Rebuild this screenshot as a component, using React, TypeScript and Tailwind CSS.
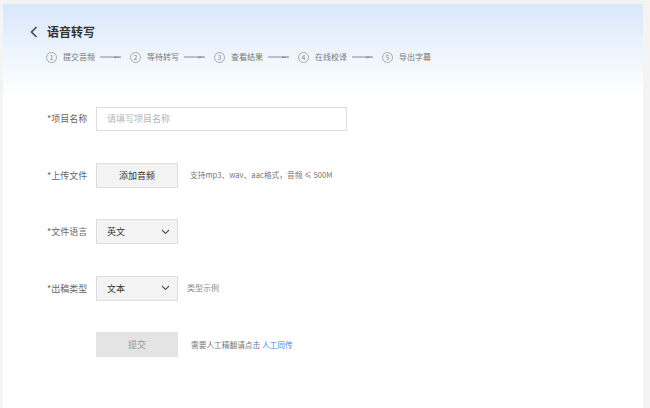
import React from "react"

const steps = ["提交音频", "等待转写", "查看结果", "在线校译", "导出字幕"]

function StepArrow() {
  return (
    <svg width="22" height="6" viewBox="0 0 22 6" className="shrink-0">
      <line x1="0" y1="3" x2="21" y2="3" stroke="#8c8c8c" strokeWidth="1" />
      <polygon points="14,2.4 21.5,3 14,4.2" fill="#8c8c8c" />
    </svg>
  )
}

function Chevron() {
  return (
    <svg width="9" height="6" viewBox="0 0 9 6" className="shrink-0">
      <polyline points="1,1 4.5,4.5 8,1" fill="none" stroke="#555" strokeWidth="1.1" />
    </svg>
  )
}

function Row({ label, children }: { label: string; children: React.ReactNode }) {
  return (
    <div className="flex h-[25px] items-center">
      <span className="w-[49px] shrink-0 text-[9px] leading-none text-[#666]">{label}</span>
      {children}
    </div>
  )
}

export default function App() {
  return (
    <div className="min-h-screen bg-[#f4f4f4] pl-[3px] pr-[7px] pt-[4px] font-['Noto_Sans_CJK_SC',sans-serif]">
      <div className="h-[404px] bg-[linear-gradient(180deg,#d8e7fb_0px,#eef5fd_50px,#ffffff_92px)]">
        {/* header */}
        <div className="pl-[27px] pt-[17px]">
          <div className="flex h-[22px] items-center gap-[9px]">
            <svg width="8" height="12" viewBox="0 0 8 12" className="shrink-0">
              <polyline points="6.5,1 1.5,6 6.5,11" fill="none" stroke="#444" strokeWidth="1.6" />
            </svg>
            <span className="text-[12px] font-bold leading-none text-[#333]">语音转写</span>
          </div>
          <div className="mt-[8px] flex h-[12px] items-center pl-[16px]">
            {steps.map((s, i) => (
              <div key={s} className="flex items-center">
                <span className="flex h-[11px] w-[11px] items-center justify-center rounded-full border border-[#a8a8a8] text-[7px] leading-none text-[#888]">
                  {i + 1}
                </span>
                <span className="ml-[6px] text-[8px] leading-none text-[#777]">{s}</span>
                {i < steps.length - 1 && (
                  <div className="ml-[5px] mr-[8px]">
                    <StepArrow />
                  </div>
                )}
              </div>
            ))}
          </div>
        </div>

        {/* form */}
        <div className="mt-[43px] flex flex-col gap-[31.5px] pl-[44px]">
          <Row label="*项目名称">
            <input
              placeholder="请填写项目名称"
              className="h-[24px] w-[251px] border border-[#dcdcdc] bg-white px-[10px] text-[9px] text-[#333] outline-none placeholder:text-[#b5b5b5]"
            />
          </Row>
          <Row label="*上传文件">
            <button className="h-[25px] w-[82px] border border-[#dcdcdc] bg-[#f3f3f3] text-[9px] leading-none text-[#333]">
              添加音频
            </button>
            <span className="ml-[12px] text-[7.7px] leading-none text-[#777]">
              支持mp3、wav、aac格式，音频 ≤ 500M
            </span>
          </Row>
          <Row label="*文件语言">
            <div className="flex h-[25px] w-[82px] items-center justify-between border border-[#dcdcdc] bg-[#f3f3f3] pl-[10px] pr-[7px]">
              <span className="text-[9px] leading-none text-[#333]">英文</span>
              <Chevron />
            </div>
          </Row>
          <Row label="*出稿类型">
            <div className="flex h-[25px] w-[82px] items-center justify-between border border-[#dcdcdc] bg-[#f3f3f3] pl-[10px] pr-[7px]">
              <span className="text-[9px] leading-none text-[#333]">文本</span>
              <Chevron />
            </div>
            <span className="ml-[9px] text-[8px] leading-none text-[#888]">类型示例</span>
          </Row>
          <Row label="">
            <button className="h-[25px] w-[82px] bg-[#e4e4e4] text-[9px] leading-none text-[#999]">
              提交
            </button>
            <span className="ml-[13px] text-[7.7px] leading-none text-[#777]">
              需要人工精翻请点击 <span className="text-[#3b86f0]">人工同传</span>
            </span>
          </Row>
        </div>
      </div>
    </div>
  )
}
